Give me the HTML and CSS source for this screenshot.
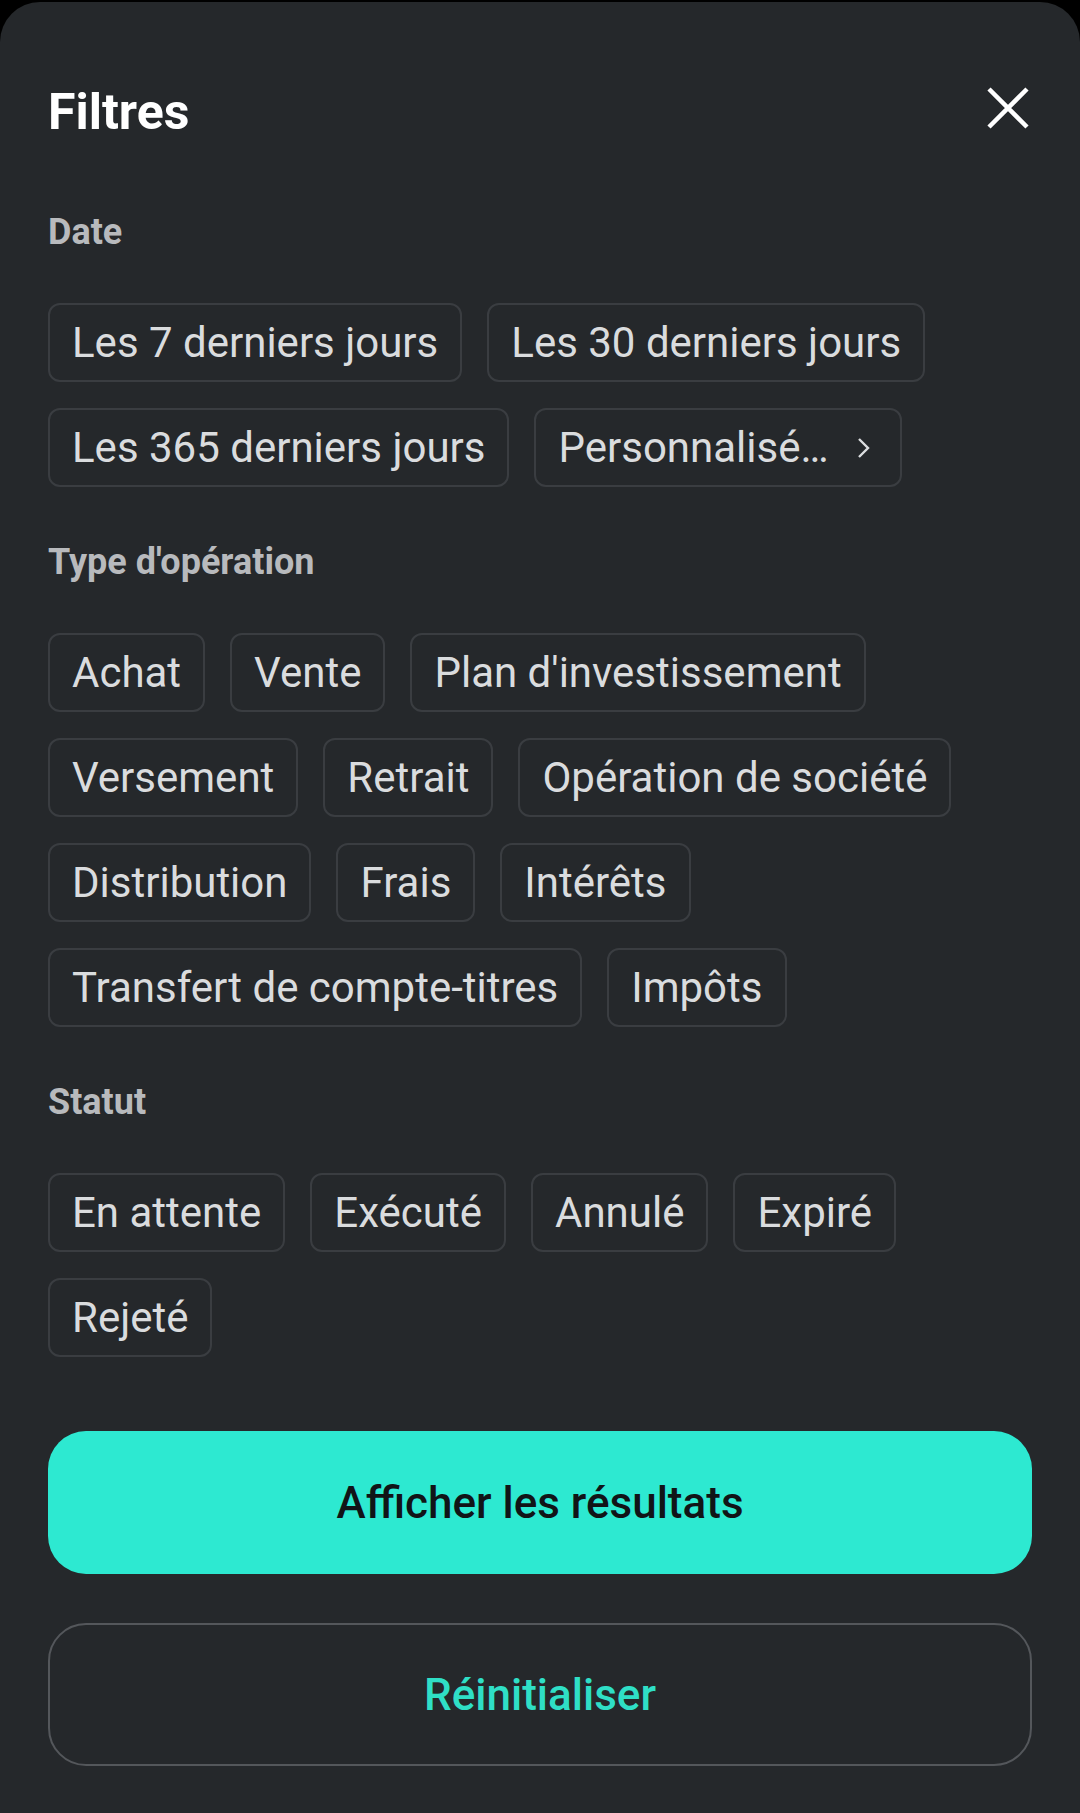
FILE: index.html
```html
<!DOCTYPE html>
<html lang="fr">
<head>
    <meta charset="UTF-8" />
    <meta name="viewport" content="width=device-width, initial-scale=1.0" />
    <title>Filtres</title>
    <link rel="stylesheet" href="styles.css">
</head>
<body>
    <div class="sheet">
        <!-- Header with title and close button -->
        <div class="header">
            <h1>Filtres</h1>
            <button class="close" type="button" aria-label="Fermer">
                <svg width="42" height="42" viewBox="0 0 42 42">
                    <path d="M2 2 L40 40 M40 2 L2 40" stroke="#ffffff" stroke-width="4.5" fill="none" />
                </svg>
            </button>
        </div>

        <!-- Date -->
        <div class="section">
            <div class="section-label">Date</div>
            <div class="chips">
                <span class="chip">Les 7 derniers jours</span>
                <span class="chip">Les 30 derniers jours</span>
                <span class="chip">Les 365 derniers jours</span>
                <span class="chip chip-more">Personnalisé…
                    <svg width="14" height="22" viewBox="0 0 14 22">
                        <path d="M2 2 L11 11 L2 20" stroke="#dcdee0" stroke-width="2.4" fill="none" />
                    </svg>
                </span>
            </div>
        </div>

        <!-- Type d'opération -->
        <div class="section">
            <div class="section-label">Type d'opération</div>
            <div class="chips">
                <span class="chip">Achat</span>
                <span class="chip">Vente</span>
                <span class="chip">Plan d'investissement</span>
                <span class="chip">Versement</span>
                <span class="chip">Retrait</span>
                <span class="chip">Opération de société</span>
                <span class="chip">Distribution</span>
                <span class="chip">Frais</span>
                <span class="chip">Intérêts</span>
                <span class="chip">Transfert de compte-titres</span>
                <span class="chip">Impôts</span>
            </div>
        </div>

        <!-- Statut -->
        <div class="section">
            <div class="section-label">Statut</div>
            <div class="chips">
                <span class="chip">En attente</span>
                <span class="chip">Exécuté</span>
                <span class="chip">Annulé</span>
                <span class="chip">Expiré</span>
                <span class="chip">Rejeté</span>
            </div>
        </div>

        <!-- Actions -->
        <div class="actions">
            <button class="btn btn-primary" type="button">Afficher les résultats</button>
            <button class="btn btn-outline" type="button">Réinitialiser</button>
        </div>
    </div>
</body>
</html>
```

FILE: styles.css
```css
/* Page background behind the bottom sheet */
body {
    margin: 0;
    padding: 0;
    background: #000000;
    font-family: Roboto, "Noto Sans", "Liberation Sans", sans-serif;
}

/* The sheet itself */
.sheet {
    margin-top: 2px;
    min-height: 1811px;
    box-sizing: border-box;
    padding: 82px 48px 47px;
    background-color: #25282b;
    border-radius: 40px 40px 0 0;
}

.header {
    display: flex;
    align-items: center;
    justify-content: space-between;
    height: 56px;
    margin-bottom: 72px;
}

h1 {
    margin: 0;
    font-size: 50px;
    line-height: 56px;
    font-weight: 700;
    color: #ffffff;
}

.close {
    display: flex;
    padding: 0;
    margin: 0 3px 8px 0;
    border: none;
    background: none;
}

/* Sections and chips */
.section + .section {
    margin-top: 55px;
}

.section-label {
    font-size: 36px;
    line-height: 40px;
    font-weight: 700;
    color: #b8babd;
    margin-bottom: 51px;
}

.chips {
    display: flex;
    flex-wrap: wrap;
    gap: 26px 25px;
}

.chip {
    display: inline-flex;
    align-items: center;
    height: 79px;
    box-sizing: border-box;
    padding: 0 22px;
    border: 2.5px solid #3a3d41;
    border-radius: 12px;
    font-size: 42px;
    line-height: 47px;
    color: #dadcde;
}

.chip-more {
    padding-right: 29px;
}

.chip-more svg {
    margin-left: 28px;
}

/* Bottom buttons */
.actions {
    margin-top: 74px;
    display: flex;
    flex-direction: column;
    gap: 49px;
}

.btn {
    height: 143px;
    border-radius: 38px;
    font-family: Roboto, "Noto Sans", "Liberation Sans", sans-serif;
    font-size: 44px;
    font-weight: 500;
    cursor: pointer;
}

.btn-primary {
    border: none;
    background-color: #2de9d1;
    color: #111417;
}

.btn-outline {
    border: 2.5px solid #54575b;
    background: transparent;
    color: #2fdfc6;
}
```
